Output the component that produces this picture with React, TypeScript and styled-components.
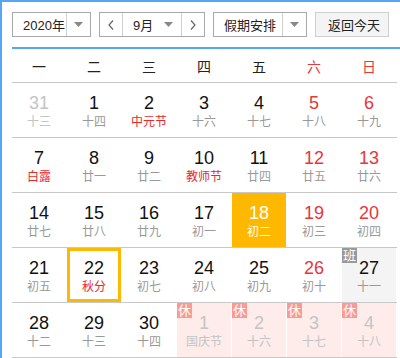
import styled, { createGlobalStyle, css } from "styled-components";

const GlobalStyle = createGlobalStyle`
  body {
    margin: 0;
    font-family: "Liberation Sans", "Noto Sans CJK SC", sans-serif;
    background: #fff;
  }
`;

type Day = {
  n: number;
  lunar: string;
  kind?: "prev" | "next";
  weekend?: boolean;
  fest?: boolean;
  badge?: "休" | "班";
  today?: boolean;
  selected?: boolean;
};

const weeks: Day[][] = [
  [
    { n: 31, lunar: "十三", kind: "prev" },
    { n: 1, lunar: "十四" },
    { n: 2, lunar: "中元节", fest: true },
    { n: 3, lunar: "十六" },
    { n: 4, lunar: "十七" },
    { n: 5, lunar: "十八", weekend: true },
    { n: 6, lunar: "十九", weekend: true },
  ],
  [
    { n: 7, lunar: "白露", fest: true },
    { n: 8, lunar: "廿一" },
    { n: 9, lunar: "廿二" },
    { n: 10, lunar: "教师节", fest: true },
    { n: 11, lunar: "廿四" },
    { n: 12, lunar: "廿五", weekend: true },
    { n: 13, lunar: "廿六", weekend: true },
  ],
  [
    { n: 14, lunar: "廿七" },
    { n: 15, lunar: "廿八" },
    { n: 16, lunar: "廿九" },
    { n: 17, lunar: "初一" },
    { n: 18, lunar: "初二", today: true },
    { n: 19, lunar: "初三", weekend: true },
    { n: 20, lunar: "初四", weekend: true },
  ],
  [
    { n: 21, lunar: "初五" },
    { n: 22, lunar: "秋分", fest: true, selected: true },
    { n: 23, lunar: "初七" },
    { n: 24, lunar: "初八" },
    { n: 25, lunar: "初九" },
    { n: 26, lunar: "初十", weekend: true },
    { n: 27, lunar: "十一", badge: "班" },
  ],
  [
    { n: 28, lunar: "十二" },
    { n: 29, lunar: "十三" },
    { n: 30, lunar: "十四" },
    { n: 1, lunar: "国庆节", kind: "next", badge: "休" },
    { n: 2, lunar: "十六", kind: "next", badge: "休" },
    { n: 3, lunar: "十七", kind: "next", badge: "休" },
    { n: 4, lunar: "十八", kind: "next", badge: "休" },
  ],
];

const weekdays = ["一", "二", "三", "四", "五", "六", "日"];

export default function App() {
  return (
    <>
      <GlobalStyle />
      <Wrapper>
        <Toolbar>
          <SelectBox $width={79}>
            <SelectText>2020年</SelectText>
            <DropPart>
              <Caret />
            </DropPart>
          </SelectBox>
          <SelectBox $width={106}>
            <ArrowPart $side="left">
              <Chevron dir="left" />
            </ArrowPart>
            <SelectText>9月</SelectText>
            <CaretInline>
              <Caret />
            </CaretInline>
            <ArrowPart $side="right">
              <Chevron dir="right" />
            </ArrowPart>
          </SelectBox>
          <SelectBox $width={94}>
            <SelectText>假期安排</SelectText>
            <DropPart>
              <Caret />
            </DropPart>
          </SelectBox>
          <TodayButton>返回今天</TodayButton>
        </Toolbar>
        <BlueLine />
        <WeekHeader>
          {weekdays.map((w, i) => (
            <WeekDay key={w} $red={i >= 5}>
              {w}
            </WeekDay>
          ))}
        </WeekHeader>
        {weeks.map((week, wi) => (
          <Row key={wi}>
            {week.map((d, di) => (
              <Cell
                key={di}
                $today={d.today}
                $selected={d.selected}
                $kind={d.kind}
                $work={d.badge === "班"}
              >
                {d.badge && <Badge $work={d.badge === "班"}>{d.badge}</Badge>}
                <Num $weekend={d.weekend} $kind={d.kind} $today={d.today}>
                  {d.n}
                </Num>
                <Lunar $fest={d.fest} $kind={d.kind} $today={d.today}>
                  {d.lunar}
                </Lunar>
              </Cell>
            ))}
          </Row>
        ))}
      </Wrapper>
    </>
  );
}

function Caret() {
  return (
    <svg width="9" height="5" viewBox="0 0 9 5">
      <path d="M0 0 L9 0 L4.5 5 Z" fill="#888" />
    </svg>
  );
}

function Chevron({ dir }: { dir: "left" | "right" }) {
  return (
    <svg width="6" height="10" viewBox="0 0 6 10">
      <polyline
        points={dir === "left" ? "5,0.5 1,5 5,9.5" : "1,0.5 5,5 1,9.5"}
        fill="none"
        stroke="#666"
        strokeWidth="1.2"
      />
    </svg>
  );
}

const Wrapper = styled.div`
  width: 400px;
  height: 358px;
  box-sizing: border-box;
  border-top: 2px solid #55a6f6;
  border-left: 2px solid #55a6f6;
  padding: 10px 0 0 10px;
  overflow: hidden;
`;

const Toolbar = styled.div`
  display: flex;
  gap: 8px;
  height: 25px;
`;

const SelectBox = styled.div<{ $width: number }>`
  display: flex;
  align-items: stretch;
  width: ${(p) => p.$width}px;
  box-sizing: border-box;
  border: 1px solid #a8a8a8;
  background: #fff;
  color: #222;
`;

const SelectText = styled.div`
  flex: 1;
  display: flex;
  align-items: center;
  padding-left: 10px;
  font-size: 13px;
  white-space: nowrap;
`;

const DropPart = styled.div`
  width: 23px;
  border-left: 1px solid #d0d0d0;
  display: flex;
  align-items: center;
  justify-content: center;
`;

const CaretInline = styled.div`
  display: flex;
  align-items: center;
  padding-right: 8px;
`;

const ArrowPart = styled.div<{ $side: "left" | "right" }>`
  width: 22px;
  display: flex;
  align-items: center;
  justify-content: center;
  ${(p) =>
    p.$side === "left"
      ? css`
          border-right: 1px solid #d0d0d0;
        `
      : css`
          border-left: 1px solid #d0d0d0;
        `}
`;

const TodayButton = styled.div`
  width: 74px;
  box-sizing: border-box;
  border: 1px solid #cfcfcf;
  background: #f4f4f4;
  display: flex;
  align-items: center;
  justify-content: center;
  padding-left: 4px;
  font-size: 13px;
  color: #222;
`;

const BlueLine = styled.div`
  margin-top: 10px;
  height: 2px;
  background: #55a6f6;
`;

const WeekHeader = styled.div`
  display: grid;
  grid-template-columns: repeat(7, 54px);
  column-gap: 1px;
  width: 385px;
  height: 33px;
  border-bottom: 1px solid #c8c8c8;
`;

const WeekDay = styled.div<{ $red?: boolean }>`
  display: flex;
  align-items: center;
  justify-content: center;
  font-size: 14px;
  color: ${(p) => (p.$red ? "#e8363a" : "#222")};
`;

const Row = styled.div`
  display: grid;
  grid-template-columns: repeat(7, 54px);
  column-gap: 1px;
  width: 385px;
  height: 54px;
  border-bottom: 1px solid #c8c8c8;
`;

const Cell = styled.div<{
  $today?: boolean;
  $selected?: boolean;
  $kind?: "prev" | "next";
  $work?: boolean;
}>`
  position: relative;
  display: flex;
  flex-direction: column;
  align-items: center;
  box-sizing: border-box;
  padding-top: 10px;
  background: ${(p) =>
    p.$today ? "#ffb800" : p.$kind === "next" ? "#fdecea" : p.$work ? "#f4f4f4" : "#fff"};
  ${(p) =>
    p.$selected &&
    css`
      box-shadow: inset 0 0 0 3px #ffb800;
    `}
`;

const Num = styled.div<{ $weekend?: boolean; $kind?: "prev" | "next"; $today?: boolean }>`
  font-size: 18px;
  line-height: 20px;
  color: ${(p) =>
    p.$today
      ? "#fff"
      : p.$kind
        ? "#c4c4c4"
        : p.$weekend
          ? "#e8363a"
          : "#111"};
`;

const Lunar = styled.div<{ $fest?: boolean; $kind?: "prev" | "next"; $today?: boolean }>`
  margin-top: 1px;
  font-size: 12px;
  line-height: 16px;
  white-space: nowrap;
  color: ${(p) =>
    p.$today ? "#fff" : p.$kind ? "#c4c4c4" : p.$fest ? "#e8282c" : "#999"};
`;

const Badge = styled.div<{ $work?: boolean }>`
  position: absolute;
  top: 0;
  left: 0;
  width: 15px;
  height: 15px;
  line-height: 15px;
  text-align: center;
  font-size: 13px;
  color: #fff;
  background: ${(p) => (p.$work ? "#999" : "#fb9a92")};
`;
